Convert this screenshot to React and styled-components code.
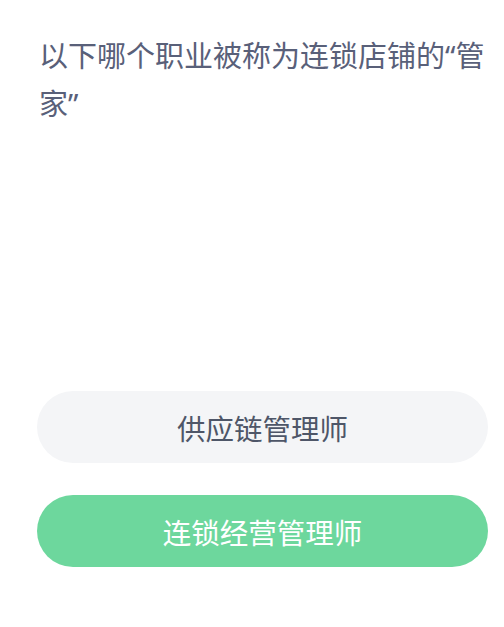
import styled, { createGlobalStyle } from "styled-components";

const GlobalStyle = createGlobalStyle`
  body {
    margin: 0;
    background: #fff;
    font-family: "Noto Sans", "Noto Sans CJK SC", sans-serif;
  }
`;

const Page = styled.div`
  display: flex;
  flex-direction: column;
  padding: 32px 16px 0 37px;
`;

const Question = styled.h2`
  margin: 0 0 0 2px;
  font-size: 29px;
  line-height: 48px;
  font-weight: 400;
  color: #596079;
`;

const Options = styled.div`
  display: flex;
  flex-direction: column;
  gap: 32px;
  margin-top: 263px;
`;

const Option = styled.button`
  display: flex;
  align-items: center;
  justify-content: center;
  height: 72px;
  border: none;
  border-radius: 36px;
  font-family: inherit;
  font-size: 28.5px;
  background: ${(p) => (p.$correct ? "#6dd79d" : "#f4f5f7")};
  color: ${(p) => (p.$correct ? "#ffffff" : "#4e5668")};
`;

const options = [
  { text: "供应链管理师", correct: false },
  { text: "连锁经营管理师", correct: true },
];

const App = () => {
  return (
    <Page>
      <GlobalStyle />
      <Question>以下哪个职业被称为连锁店铺的“管家”</Question>
      <Options>
        {options.map((o) => (
          <Option key={o.text} $correct={o.correct}>
            {o.text}
          </Option>
        ))}
      </Options>
    </Page>
  );
};

export default App;
